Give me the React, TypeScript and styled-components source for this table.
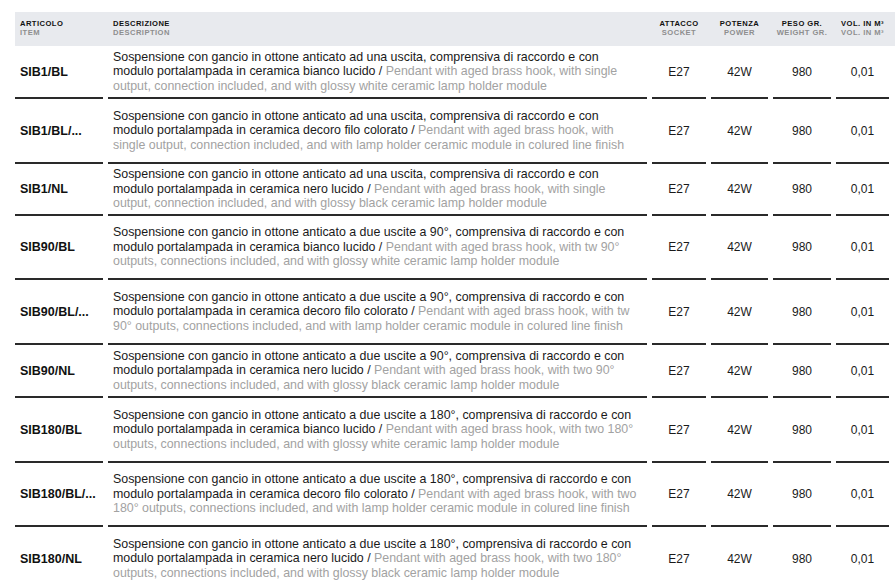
import React from "react";
import styled, { createGlobalStyle } from "styled-components";

const GlobalStyle = createGlobalStyle`
  html, body { margin: 0; padding: 0; background: #ffffff; }
  body { font-family: "Liberation Sans", Arial, sans-serif; color: #1a1a1a; }
`;

const Page = styled.div`
  padding: 12px 0 0 15px;
  width: 880px;
`;

const cols = "88px 539px 54px 57px 58px 53px";

const HeaderBar = styled.div`
  display: grid;
  grid-template-columns: ${cols};
  column-gap: 5px;
  height: 34px;
  align-items: center;
  background: #e8eaee;
`;

const HeadCell = styled.div<{ $center?: boolean }>`
  display: flex;
  flex-direction: column;
  align-items: ${(p) => (p.$center ? "center" : "flex-start")};
  padding-left: ${(p) => (p.$center ? "0" : "5px")};
  font-family: "Liberation Sans", Arial, sans-serif;
  font-weight: 700;
  font-size: 7.6px;
  line-height: 8.7px;
  letter-spacing: 0.45px;
  text-transform: uppercase;
  white-space: nowrap;
`;

const HeadTitle = styled.span`
  color: #111111;
`;

const HeadSub = styled.span`
  color: #8e8e8e;
`;

const Row = styled.div<{ $h: number }>`
  display: grid;
  grid-template-columns: ${cols};
  column-gap: 5px;
  height: ${(p) => p.$h}px;
`;

const Cell = styled.div<{ $center?: boolean }>`
  display: flex;
  align-items: center;
  justify-content: ${(p) => (p.$center ? "center" : "flex-start")};
  padding-left: ${(p) => (p.$center ? "0" : "5px")};
  border-bottom: 2px solid #2a2a2a;
  font-size: 12px;
  color: #1a1a1a;
  white-space: nowrap;
`;

const Code = styled(Cell)`
  font-weight: 700;
  font-size: 12.5px;
  color: #111111;
`;

const Desc = styled.div`
  display: flex;
  flex-direction: column;
  justify-content: center;
  padding-left: 5px;
  border-bottom: 2px solid #2a2a2a;
  font-size: 12.4px;
  line-height: 14.4px;
  color: #1a1a1a;
  white-space: nowrap;
`;

const Line = styled.span``;

const En = styled.span`
  color: #a2a2a2;
`;

type RowData = {
  code: string;
  h: number;
  it1: string;
  it2: string;
  en2: string;
  en3: string;
};

const L1_1 = "Sospensione con gancio in ottone anticato ad una uscita, comprensiva di raccordo e con";
const L1_90 = "Sospensione con gancio in ottone anticato a due uscite a 90°, comprensiva di raccordo e con";
const L1_180 = "Sospensione con gancio in ottone anticato a due uscite a 180°, comprensiva di raccordo e con";

const rows: RowData[] = [
  {
    code: "SIB1/BL",
    h: 53,
    it1: L1_1,
    it2: "modulo portalampada in ceramica bianco lucido / ",
    en2: "Pendant with aged brass hook, with single",
    en3: "output, connection included, and with glossy white ceramic lamp holder module",
  },
  {
    code: "SIB1/BL/...",
    h: 65,
    it1: L1_1,
    it2: "modulo portalampada in ceramica decoro filo colorato / ",
    en2: "Pendant with aged brass hook, with",
    en3: "single output, connection included, and with lamp holder ceramic module in colured line finish",
  },
  {
    code: "SIB1/NL",
    h: 52,
    it1: L1_1,
    it2: "modulo portalampada in ceramica nero lucido / ",
    en2: "Pendant with aged brass hook, with single",
    en3: "output, connection included, and with glossy black ceramic lamp holder module",
  },
  {
    code: "SIB90/BL",
    h: 64,
    it1: L1_90,
    it2: "modulo portalampada in ceramica bianco lucido / ",
    en2: "Pendant with aged brass hook, with tw 90°",
    en3: "outputs, connections included, and with glossy white ceramic lamp holder module",
  },
  {
    code: "SIB90/BL/...",
    h: 65,
    it1: L1_90,
    it2: "modulo portalampada in ceramica decoro filo colorato / ",
    en2: "Pendant with aged brass hook, with tw",
    en3: "90° outputs, connections included, and with lamp holder ceramic module in colured line finish",
  },
  {
    code: "SIB90/NL",
    h: 53,
    it1: L1_90,
    it2: "modulo portalampada in ceramica nero lucido / ",
    en2: "Pendant with aged brass hook, with two 90°",
    en3: "outputs, connections included, and with glossy black ceramic lamp holder module",
  },
  {
    code: "SIB180/BL",
    h: 65,
    it1: L1_180,
    it2: "modulo portalampada in ceramica bianco lucido / ",
    en2: "Pendant with aged brass hook, with two 180°",
    en3: "outputs, connections included, and with glossy white ceramic lamp holder module",
  },
  {
    code: "SIB180/BL/...",
    h: 64,
    it1: L1_180,
    it2: "modulo portalampada in ceramica decoro filo colorato / ",
    en2: "Pendant with aged brass hook, with two",
    en3: "180° outputs, connections included, and with lamp holder ceramic module in colured line finish",
  },
  {
    code: "SIB180/NL",
    h: 65,
    it1: L1_180,
    it2: "modulo portalampada in ceramica nero lucido / ",
    en2: "Pendant with aged brass hook, with two 180°",
    en3: "outputs, connections included, and with glossy black ceramic lamp holder module",
  },
];

const headers: { t: string; s: string; center?: boolean }[] = [
  { t: "ARTICOLO", s: "ITEM" },
  { t: "DESCRIZIONE", s: "DESCRIPTION" },
  { t: "ATTACCO", s: "SOCKET", center: true },
  { t: "POTENZA", s: "POWER", center: true },
  { t: "PESO GR.", s: "WEIGHT GR.", center: true },
  { t: "VOL. IN M³", s: "VOL. IN M³", center: true },
];

export default function App() {
  return (
    <>
      <GlobalStyle />
      <Page>
        <HeaderBar>
          {headers.map((h) => (
            <HeadCell key={h.t} $center={h.center}>
              <HeadTitle>{h.t}</HeadTitle>
              <HeadSub>{h.s}</HeadSub>
            </HeadCell>
          ))}
        </HeaderBar>
        {rows.map((r) => (
          <Row key={r.code} $h={r.h}>
            <Code>{r.code}</Code>
            <Desc>
              <Line>{r.it1}</Line>
              <Line>
                {r.it2}
                <En>{r.en2}</En>
              </Line>
              <Line>
                <En>{r.en3}</En>
              </Line>
            </Desc>
            <Cell $center>E27</Cell>
            <Cell $center>42W</Cell>
            <Cell $center>980</Cell>
            <Cell $center>0,01</Cell>
          </Row>
        ))}
      </Page>
    </>
  );
}
